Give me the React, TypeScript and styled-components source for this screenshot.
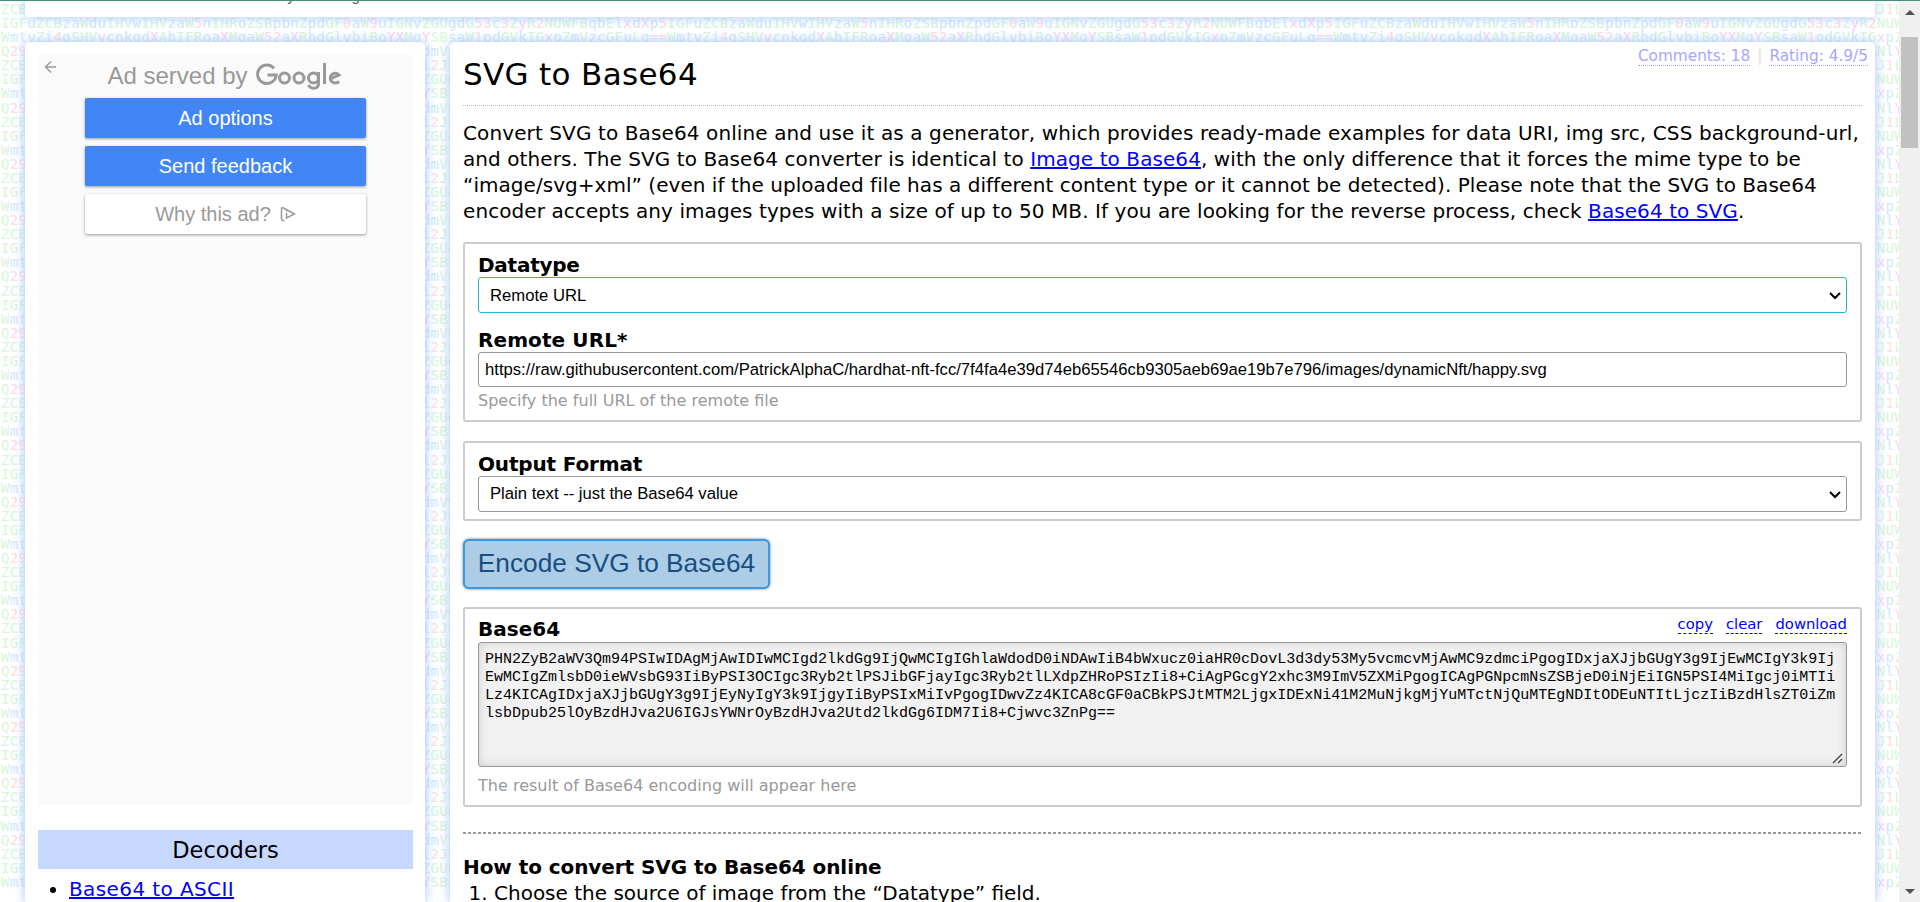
import React from 'react';
import styled, { createGlobalStyle } from 'styled-components';

const Global = createGlobalStyle`
  *{box-sizing:border-box}
  body{margin:0;background:#fff;overflow:hidden;color:#000;font:20px/26px "DejaVu Sans",Verdana,sans-serif}
  a{color:#00f}
`;
const Page = styled.div`position:relative;display:flex;width:1920px;height:902px;overflow:hidden;`;
const Backdrop = styled.div`
  position:absolute;inset:0;overflow:hidden;white-space:pre;padding:2px 0 0 1px;
  font:14px/14.08px "DejaVu Sans Mono",monospace;
`;
const CodeRow = styled.div`height:14.08px;letter-spacing:.33px;`;
const Glyph = styled.span<{ $c: string }>`color:${p => p.$c};`;
const Shell = styled.div`position:relative;flex:1;display:flex;flex-direction:column;padding:0 24px 0 25px;gap:25px;`;
const panel = `background:#fff;box-shadow:0 0 12px #a3c2ff;`;
const TopPanel = styled.header`${panel}height:17px;border-radius:0 0 4px 4px;flex:none;`;
const TopText = styled.div`
  height:4px;overflow:hidden;padding-left:254px;font:15px/16px "Liberation Sans",sans-serif;color:#555;
  span{display:block;margin-top:-12px}
`;
const TopLine = styled.div`position:absolute;left:0;right:0;top:0;height:1px;background:#46917c;z-index:2;`;
const Columns = styled.div`display:flex;gap:25px;flex:1;min-height:0;`;
const Side = styled.aside`${panel}width:400px;border-radius:5px 5px 0 0;padding:13px 12px 0 13px;`;
const Main = styled.main`
  ${panel}flex:1;min-width:0;border-radius:5px 5px 0 0;padding:0 13px;white-space:nowrap;position:relative;
`;
const Ad = styled.section`
  height:750px;background:#fafafa;font-family:"Liberation Sans",sans-serif;display:flex;flex-direction:column;
  align-items:center;gap:8px;position:relative;
`;
const Back = styled.svg`position:absolute;left:6px;top:5px;`;
const Served = styled.div`height:35px;display:flex;align-items:center;gap:8px;font-size:24px;color:#999;padding-top:6px;margin-right:2px;`;
const AdButton = styled.div<{ $plain?: boolean }>`
  width:281px;height:40px;border-radius:2px;display:flex;align-items:center;justify-content:center;gap:9px;
  font-size:20px;background:${p => (p.$plain ? '#fff' : '#4285f4')};color:${p => (p.$plain ? '#999' : '#fff')};
  box-shadow:0 1px 3px rgba(0,0,0,.4);
`;
const SideTitle = styled.h2`
  margin:25px 0 0;height:39px;background:#c6d8fd;text-align:center;font-size:22.5px;line-height:40px;font-weight:400;
`;
const SideList = styled.ul`margin:7px 0 0;padding-left:31px;letter-spacing:.4px;`;
const Meta = styled.div`position:absolute;right:7px;top:5px;display:flex;gap:7px;font-size:15.3px;line-height:18px;color:#ddd;`;
const MetaLink = styled.span`color:#a6a6ff;border-bottom:1px dotted #a6a6ff;height:19px;`;
const Title = styled.h1`
  margin:0;height:64px;padding-top:11px;border-bottom:1px dotted #bbb;font-weight:400;font-size:31px;line-height:42px;letter-spacing:.33px;
`;
const Intro = styled.p`margin:14px 0 18px;`;
const Fit = styled.span<{ $s: number }>`letter-spacing:${p => p.$s}px;`;
const Box = styled.section<{ $h: number }>`
  height:${p => p.$h}px;border:2px solid #ccc;border-radius:3px;padding:8px 13px 0;position:relative;
`;
const Label = styled.div<{ $s?: number }>`font-weight:700;height:25px;letter-spacing:${p => p.$s ?? 0}px;`;
const ResultLabel = styled(Label)`line-height:25px;`;
const Field = styled.div<{ $active?: boolean; $input?: boolean }>`
  height:${p => (p.$input ? 35 : 36)}px;border:1px solid ${p => (p.$active ? '#27b1d8' : '#999')};border-radius:3px;
  display:flex;align-items:center;justify-content:space-between;padding:${p => (p.$active ? 1 : 0)}px 5px 0 ${p => (p.$input ? 6 : 11)}px;
  font:16.67px/20px "Liberation Sans",sans-serif;
`;
const Help = styled.div<{ $mt: number }>`color:#999;font-size:16.05px;line-height:24px;margin-top:${p => p.$mt}px;`;
const Gap = styled.div<{ $h: number }>`height:${p => p.$h}px;`;
const Encode = styled.button`
  display:block;margin:18px 0;width:307px;height:50px;padding:0 0 2px;border:2px solid #3b99e3;border-radius:6px;background:#adcce5;
  color:#174f82;font:26.25px/42px "Liberation Sans",sans-serif;box-shadow:0 0 3px #777;
`;
const Actions = styled.div`
  position:absolute;right:13px;top:5px;display:flex;gap:13px;font-size:14.8px;line-height:20px;color:#00f;
  span{border-bottom:1px dashed #00f;height:20px}
`;
const Output = styled.div`
  position:relative;height:125px;border:1px solid #999;border-radius:3px;background:#f1f1f1;box-shadow:inset 0 0 8px #ccc;
  padding:8px 6px;font:15px/18px "Liberation Mono",monospace;white-space:pre;
`;
const Grip = styled.svg`position:absolute;right:3px;bottom:2px;`;
const Rule = styled.hr`
  border:0;height:2px;margin:25px 0 20px;background:repeating-linear-gradient(90deg,#999 0 3px,transparent 3px 5px);
`;
const Steps = styled.ol`margin:1px 0 0;padding-left:31px;`;
const Scroll = styled.div`
  position:relative;width:21px;background:#f0f0f0;display:flex;flex-direction:column;align-items:center;padding:10px 0 8px;
`;
const Arrow = styled.i<{ $down?: boolean }>`
  width:0;height:0;border:5px solid transparent;border-${p => (p.$down ? 'top' : 'bottom')}-color:#505050;
  border-${p => (p.$down ? 'bottom' : 'top')}-width:0;
`;
const Thumb = styled.div`width:17px;height:111px;background:#c1c1c1;margin:22px 0 auto;`;

const codes = [
  'ZCBtYWtlIHRoZSByZXF1ZXN0IHRvIGdldCBhIG5ldyBjb2Rll2JFIG9uIHRoZSJ1LIHNpdGUgbm9',
  'IGFuZCBzaWduIHVwIHVzaW5nIHRoZSBpbnZpdGF0aW9uIGNvZGUgdG53c3ZyR2NUWFBqbElxdXp5',
  'WmtvZi4gSHVycnkgdXAhIFRoaXMgaW52aXRhdGlvbiBoYXMgYSBsaW1pdGVkIGxpZmVzcGFuLg==',
  'Q29uZ3JhdHVsYXRpb25zISBZb3UgaGF2ZSBmb3VuZCB0aGUgdmVyeSBzZWNyZXNlY3NlY3JlIG1l',
];
codes[0] = codes[0].slice(0, 62) + 'J1LIHNpdGUgbm9';
codes[3] = codes[3].slice(0, 62) + 'NlYIG1lc3NhZ2U';

const tint = (c: string) =>
  /[0-9=]/.test(c) ? '#ffdede' : /[xXyY]/.test(c) ? '#f8d4f6' : /[A-Z]/.test(c) ? '#d8f6d8' : '#d2e9f8';

const lines = [
  'PHN2ZyB2aWV3Qm94PSIwIDAgMjAwIDIwMCIgd2lkdGg9IjQwMCIgIGhlaWdodD0iNDAwIiB4bWxucz0iaHR0cDovL3d3dy53My5vcmcvMjAwMC9zdmciPgogIDxjaXJjbGUgY3g9IjEwMCIgY3k9Ij',
  'EwMCIgZmlsbD0ieWVsbG93IiByPSI3OCIgc3Ryb2tlPSJibGFjayIgc3Ryb2tlLXdpZHRoPSIzIi8+CiAgPGcgY2xhc3M9ImV5ZXMiPgogICAgPGNpcmNsZSBjeD0iNjEiIGN5PSI4MiIgcj0iMTIi',
  'Lz4KICAgIDxjaXJjbGUgY3g9IjEyNyIgY3k9IjgyIiByPSIxMiIvPgogIDwvZz4KICA8cGF0aCBkPSJtMTM2LjgxIDExNi41M2MuNjkgMjYuMTctNjQuMTEgNDItODEuNTItLjczIiBzdHlsZT0iZm',
  'lsbDpub25lOyBzdHJva2U6IGJsYWNrOyBzdHJva2Utd2lkdGg6IDM7Ii8+Cjwvc3ZnPg==',
];

const Chevron = () => (
  <svg width="12" height="9" viewBox="0 0 12 9"><path d="M1 2l5 5 5-5" fill="none" stroke="#000" strokeWidth="2" /></svg>
);

const CodeBackdrop = () => (
  <Backdrop aria-hidden>
    {Array.from({ length: 63 }, (_, r) => (
      <CodeRow key={r}>
        {codes[r % 4].repeat(3).slice(0, 217).split('').map((c, i) => <Glyph key={i} $c={tint(c)}>{c}</Glyph>)}
      </CodeRow>
    ))}
  </Backdrop>
);

export default function App() {
  return (
    <Page>
      <Global />
      <CodeBackdrop />
      <Shell>
        <TopPanel><TopText><span>by encoding</span></TopText></TopPanel>
        <Columns>
          <Side>
            <Ad>
              <Back width="14" height="14" viewBox="0 0 14 14"><path d="M12 7H2M7 1.5L1.5 7 7 12.5" fill="none" stroke="#999" strokeWidth="1.4" /></Back>
              <Served>
                <span>Ad served by</span>
                <svg width="86" height="30" viewBox="0 0 86 30" fill="none" stroke="#999" strokeWidth="3">
                  <path d="M18 7.2A9.3 9.3 0 1 0 20.2 14H11.5" />
                  <circle cx="28.5" cy="17" r="5" /><circle cx="43" cy="17" r="5" /><circle cx="57.5" cy="17" r="5" />
                  <path d="M62.5 11v11.5c0 6-8 6-10 1.5M68.5 2v21M74 18l9-4a4.9 4.9 0 1 0 0 6.2" />
                </svg>
              </Served>
              <AdButton>Ad options</AdButton>
              <AdButton>Send feedback</AdButton>
              <AdButton $plain>
                Why this ad?
                <svg width="16" height="16" viewBox="0 0 16 16" fill="none" stroke="#999" strokeWidth="1.5">
                  <path d="M4.5 14.5H3Q1.5 14.5 1.5 13V3Q1.5 1 3.5 2L14.5 8 6.5 12V7M6.5 4v1.5" />
                </svg>
              </AdButton>
            </Ad>
            <SideTitle>Decoders</SideTitle>
            <SideList><li><a href="#ascii">Base64 to ASCII</a></li></SideList>
          </Side>
          <Main>
            <Meta><MetaLink>Comments: 18</MetaLink><span>|</span><MetaLink>Rating: 4.9/5</MetaLink></Meta>
            <Title>SVG to Base64</Title>
            <Intro>
              <Fit $s={0.11}>Convert SVG to Base64 online and use it as a generator, which provides ready-made examples for data URI, img src, CSS background-url,</Fit><br />
              <Fit $s={0.08}>and others. The SVG to Base64 converter is identical to <a href="#image">Image to Base64</a>, with the only difference that it forces the mime type to be</Fit><br />
              <Fit $s={0.04}>“image/svg+xml” (even if the uploaded file has a different content type or it cannot be detected). Please note that the SVG to Base64</Fit><br />
              <Fit $s={0.08}>encoder accepts any images types with a size of up to 50 MB. If you are looking for the reverse process, check <a href="#svg">Base64 to SVG</a>.</Fit>
            </Intro>
            <Box $h={180}>
              <Label $s={-0.25}>Datatype</Label>
              <Field $active>Remote URL<Chevron /></Field>
              <Gap $h={14} />
              <Label $s={0.1}>Remote URL*</Label>
              <Field $input>https://raw.githubusercontent.com/PatrickAlphaC/hardhat-nft-fcc/7f4fa4e39d74eb65546cb9305aeb69ae19b7e796/images/dynamicNft/happy.svg</Field>
              <Help $mt={2}>Specify the full URL of the remote file</Help>
            </Box>
            <Gap $h={19} />
            <Box $h={80}>
              <Label $s={-0.15}>Output Format</Label>
              <Field>Plain text -- just the Base64 value<Chevron /></Field>
            </Box>
            <Encode>Encode SVG to Base64</Encode>
            <Box $h={200}>
              <Actions><span>copy</span><span>clear</span><span>download</span></Actions>
              <ResultLabel>Base64</ResultLabel>
              <Output>
                {lines.map(l => <div key={l}>{l}</div>)}
                <Grip width="11" height="11" viewBox="0 0 11 11"><path d="M1 10L10 1M6 10l4-4" stroke="#444" strokeWidth="1.4" /></Grip>
              </Output>
              <Help $mt={7}>The result of Base64 encoding will appear here</Help>
            </Box>
            <Rule />
            <Label $s={-0.07}>How to convert SVG to Base64 online</Label>
            <Steps><li>Choose the source of image from the “Datatype” field.</li></Steps>
          </Main>
        </Columns>
      </Shell>
      <Scroll><Arrow /><Thumb /><Arrow $down /></Scroll>
      <TopLine />
    </Page>
  );
}
